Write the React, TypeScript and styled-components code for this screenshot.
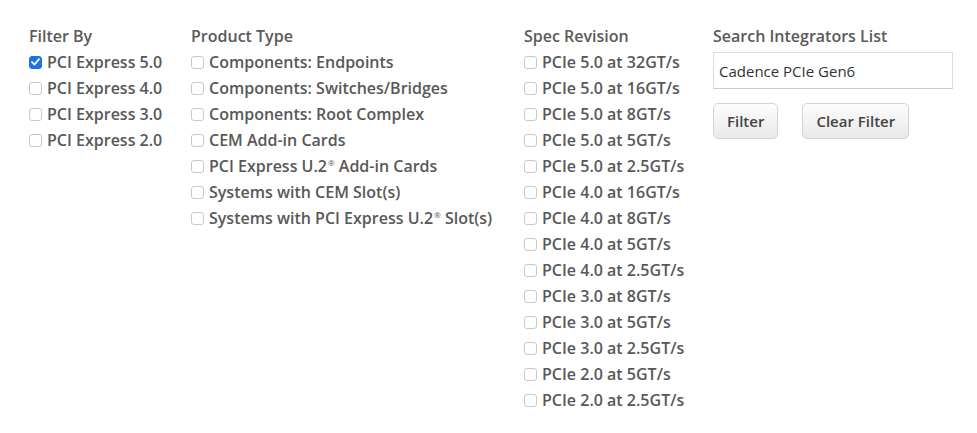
import React from "react";
import styled, { createGlobalStyle } from "styled-components";

const Global = createGlobalStyle`
  html, body { margin: 0; padding: 0; background: #fff; }
  body { font-family: "Open Sans", "Noto Sans", sans-serif; color: #555; }
`;

const Page = styled.div`
  display: grid;
  grid-template-columns: 162px 333px 189px 240px;
  padding: 24px 0 0 29px;
  align-items: start;
`;

const Column = styled.div`
  display: flex;
  flex-direction: column;
`;

const Heading = styled.div`
  font-size: 16px;
  font-weight: 600;
  line-height: 25px;
  color: #5a5a5a;
  white-space: nowrap;
`;

const Row = styled.label`
  display: flex;
  align-items: center;
  gap: 5px;
  height: 26px;
  font-size: 16px;
  font-weight: 600;
  color: #585858;
  white-space: nowrap;
`;

const Box = styled.span<{ $checked?: boolean }>`
  box-sizing: border-box;
  width: 13px;
  height: 13px;
  flex: none;
  border-radius: 3px;
  border: 1px solid ${(p) => (p.$checked ? "#1a73e8" : "#c8c8c8")};
  background: ${(p) => (p.$checked ? "#1a73e8" : "#fff")};
  display: flex;
  align-items: center;
  justify-content: center;
`;

const Sup = styled.sup`
  font-size: 8px;
  font-weight: 400;
  vertical-align: 6px;
  margin-left: 1px;
`;

const Input = styled.div`
  box-sizing: border-box;
  margin-top: 3px;
  width: 240px;
  height: 37px;
  border: 1px solid #ddd;
  border-bottom-color: #ccc;
  padding: 0 5px;
  display: flex;
  align-items: center;
  font-size: 15px;
  color: #333;
`;

const Buttons = styled.div`
  display: flex;
  gap: 24px;
  margin-top: 14px;
`;

const Button = styled.button`
  box-sizing: border-box;
  height: 36px;
  padding: 0 13px;
  border: 1px solid #d4d4d4;
  border-radius: 5px;
  background: linear-gradient(#fdfdfd, #e9e9e9);
  font-family: inherit;
  font-size: 15px;
  font-weight: 600;
  color: #444;
`;

const Check = ({ checked, children }: { checked?: boolean; children: React.ReactNode }) => (
  <Row>
    <Box $checked={checked}>
      {checked && (
        <svg width="9" height="8" viewBox="0 0 9 8">
          <path d="M1 4.2 L3.5 6.5 L8 1.2" fill="none" stroke="#fff" strokeWidth="1.8" strokeLinecap="round" strokeLinejoin="round" />
        </svg>
      )}
    </Box>
    <span>{children}</span>
  </Row>
);

const filters = ["PCI Express 5.0", "PCI Express 4.0", "PCI Express 3.0", "PCI Express 2.0"];
const specs = [
  "PCIe 5.0 at 32GT/s",
  "PCIe 5.0 at 16GT/s",
  "PCIe 5.0 at 8GT/s",
  "PCIe 5.0 at 5GT/s",
  "PCIe 5.0 at 2.5GT/s",
  "PCIe 4.0 at 16GT/s",
  "PCIe 4.0 at 8GT/s",
  "PCIe 4.0 at 5GT/s",
  "PCIe 4.0 at 2.5GT/s",
  "PCIe 3.0 at 8GT/s",
  "PCIe 3.0 at 5GT/s",
  "PCIe 3.0 at 2.5GT/s",
  "PCIe 2.0 at 5GT/s",
  "PCIe 2.0 at 2.5GT/s",
];

export default function App() {
  return (
    <>
      <Global />
      <Page>
        <Column>
          <Heading>Filter By</Heading>
          {filters.map((f, i) => (
            <Check key={f} checked={i === 0}>{f}</Check>
          ))}
        </Column>
        <Column>
          <Heading>Product Type</Heading>
          <Check>Components: Endpoints</Check>
          <Check>Components: Switches/Bridges</Check>
          <Check>Components: Root Complex</Check>
          <Check>CEM Add-in Cards</Check>
          <Check>PCI Express U.2<Sup>®</Sup> Add-in Cards</Check>
          <Check>Systems with CEM Slot(s)</Check>
          <Check>Systems with PCI Express U.2<Sup>®</Sup> Slot(s)</Check>
        </Column>
        <Column>
          <Heading>Spec Revision</Heading>
          {specs.map((s) => (
            <Check key={s}>{s}</Check>
          ))}
        </Column>
        <Column>
          <Heading>Search Integrators List</Heading>
          <Input>Cadence PCIe Gen6</Input>
          <Buttons>
            <Button>Filter</Button>
            <Button>Clear Filter</Button>
          </Buttons>
        </Column>
      </Page>
    </>
  );
}
